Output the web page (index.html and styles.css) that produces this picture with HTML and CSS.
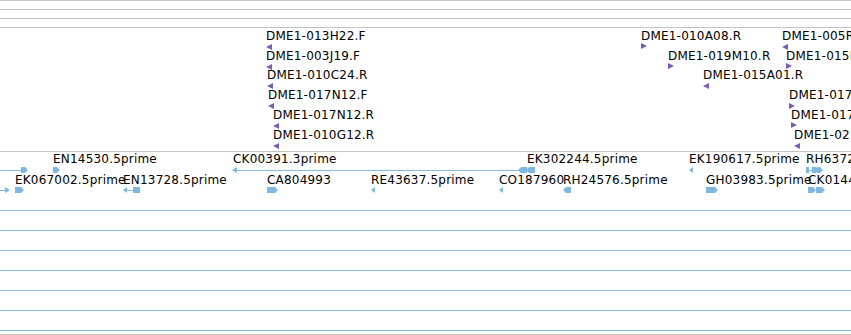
FILE: index.html
```html
<!DOCTYPE html>
<html>
<head>
<meta charset="utf-8">
<link rel="stylesheet" href="styles.css">
</head>
<body>
<div class="view">
  <div class="ruler">
    <div class="rl"></div>
    <div class="rl"></div>
    <div class="rl"></div>
  </div>

  <div class="track clones">
    <span class="lbl" style="left:266px;top:29px">DME1-013H22.F</span>
    <svg class="arr" style="left:266px;top:44px" width="6" height="6"><polygon points="0,3 6,0 6,6"/></svg>
    <span class="lbl" style="left:266px;top:49px">DME1-003J19.F</span>
    <svg class="arr" style="left:266px;top:64px" width="6" height="6"><polygon points="0,3 6,0 6,6"/></svg>
    <span class="lbl" style="left:267px;top:68px">DME1-010C24.R</span>
    <svg class="arr" style="left:267px;top:83px" width="6" height="6"><polygon points="0,3 6,0 6,6"/></svg>
    <span class="lbl" style="left:268px;top:88px">DME1-017N12.F</span>
    <svg class="arr" style="left:268px;top:103px" width="6" height="6"><polygon points="0,3 6,0 6,6"/></svg>
    <span class="lbl" style="left:273px;top:108px">DME1-017N12.R</span>
    <svg class="arr" style="left:273px;top:123px" width="6" height="6"><polygon points="0,3 6,0 6,6"/></svg>
    <span class="lbl" style="left:273px;top:128px">DME1-010G12.R</span>
    <svg class="arr" style="left:273px;top:143px" width="6" height="6"><polygon points="0,3 6,0 6,6"/></svg>

    <span class="lbl" style="left:641px;top:29px">DME1-010A08.R</span>
    <svg class="arr" style="left:641px;top:43px" width="6" height="6"><polygon points="0,0 6,3 0,6"/></svg>
    <span class="lbl" style="left:668px;top:49px">DME1-019M10.R</span>
    <svg class="arr" style="left:668px;top:63px" width="6" height="6"><polygon points="0,0 6,3 0,6"/></svg>
    <span class="lbl" style="left:703px;top:68px">DME1-015A01.R</span>
    <svg class="arr" style="left:703px;top:83px" width="6" height="6"><polygon points="0,3 6,0 6,6"/></svg>

    <span class="lbl" style="left:782px;top:29px">DME1-005R22.F</span>
    <svg class="arr" style="left:782px;top:44px" width="6" height="6"><polygon points="0,3 6,0 6,6"/></svg>
    <span class="lbl" style="left:786px;top:49px">DME1-015B04.R</span>
    <svg class="arr" style="left:786px;top:63px" width="6" height="6"><polygon points="0,0 6,3 0,6"/></svg>
    <span class="lbl" style="left:789px;top:88px">DME1-017A11.R</span>
    <svg class="arr" style="left:789px;top:103px" width="6" height="6"><polygon points="0,0 6,3 0,6"/></svg>
    <span class="lbl" style="left:791px;top:108px">DME1-017B05.R</span>
    <svg class="arr" style="left:791px;top:122px" width="6" height="6"><polygon points="0,0 6,3 0,6"/></svg>
    <span class="lbl" style="left:794px;top:128px">DME1-021C09.F</span>
    <svg class="arr" style="left:794px;top:143px" width="6" height="6"><polygon points="0,3 6,0 6,6"/></svg>
  </div>

  <div class="track ests">
    <!-- row A -->
    <div class="line" style="left:0;top:170px;width:24px"></div>
    <svg class="est" style="left:21px;top:167px" width="8" height="6"><polygon points="0,0 4,0 7,3 4,6 0,6"/></svg>
    <span class="lbl" style="left:53px;top:152px">EN14530.5prime</span>
    <svg class="est" style="left:53px;top:167px" width="8" height="6"><polygon points="0,0 4,0 7,3 4,6 0,6"/></svg>
    <span class="lbl" style="left:233px;top:152px">CK00391.3prime</span>
    <div class="line" style="left:235px;top:170px;width:290px"></div>
    <svg class="est" style="left:232px;top:167px" width="6" height="6"><polygon points="0,3 5,0 5,6"/></svg>
    <span class="lbl" style="left:527px;top:152px">EK302244.5prime</span>
    <svg class="est" style="left:518px;top:167px" width="18" height="6"><polygon points="0,3 3,0 9,0 9,6 3,6"/><polygon points="8,3 11,0 17,0 17,6 11,6"/></svg>
    <span class="lbl" style="left:689px;top:152px">EK190617.5prime</span>
    <svg class="est" style="left:689px;top:167px" width="5" height="6"><polygon points="0,3 4,0 4,6"/></svg>
    <span class="lbl" style="left:806px;top:152px">RH63722.5prime</span>
    <div class="line" style="left:806px;top:170px;width:10px"></div>
    <svg class="est" style="left:806px;top:167px" width="18" height="6"><polygon points="0,0 3,0 3,6 0,6"/><polygon points="6,0 10,0 13,3 10,6 6,6"/><polygon points="11,0 14,0 17,3 14,6 11,6"/></svg>

    <!-- row B -->
    <div class="line" style="left:0;top:190px;width:8px"></div>
    <svg class="est" style="left:5px;top:187px" width="6" height="6"><polygon points="0,0 5,3 0,6"/></svg>
    <span class="lbl" style="left:15px;top:173px">EK067002.5prime</span>
    <svg class="est" style="left:15px;top:187px" width="10" height="6"><polygon points="0,0 6,0 9,3 6,6 0,6"/></svg>
    <span class="lbl" style="left:123px;top:173px">EN13728.5prime</span>
    <div class="line" style="left:125px;top:190px;width:10px"></div>
    <svg class="est" style="left:123px;top:187px" width="18" height="6"><polygon points="0,3 4,0 4,6"/><polygon points="10,0 17,0 17,6 10,6"/></svg>
    <span class="lbl" style="left:267px;top:173px">CA804993</span>
    <svg class="est" style="left:267px;top:187px" width="12" height="6"><polygon points="0,0 8,0 11,3 8,6 0,6"/></svg>
    <span class="lbl" style="left:371px;top:173px">RE43637.5prime</span>
    <svg class="est" style="left:371px;top:187px" width="5" height="6"><polygon points="0,3 4,0 4,6"/></svg>
    <span class="lbl" style="left:499px;top:173px">CO187960</span>
    <svg class="est" style="left:499px;top:187px" width="5" height="6"><polygon points="0,3 4,0 4,6"/></svg>
    <span class="lbl" style="left:563px;top:173px">RH24576.5prime</span>
    <svg class="est" style="left:563px;top:187px" width="9" height="6"><polygon points="0,3 3,0 8,0 8,6 3,6"/></svg>
    <span class="lbl" style="left:706px;top:173px">GH03983.5prime</span>
    <svg class="est" style="left:706px;top:187px" width="13" height="6"><polygon points="0,0 9,0 12,3 9,6 0,6"/></svg>
    <span class="lbl" style="left:808px;top:173px">CK014461.5prime</span>
    <svg class="est" style="left:808px;top:187px" width="18" height="6"><polygon points="0,0 5,0 8,3 5,6 0,6"/><polygon points="8,0 14,0 17,3 14,6 8,6"/></svg>
  </div>

  <div class="lanes">
    <div class="lane"></div>
    <div class="lane"></div>
    <div class="lane"></div>
    <div class="lane"></div>
    <div class="lane"></div>
    <div class="lane"></div>
    <div class="lane last"></div>
  </div>
</div>
</body>
</html>
```

FILE: styles.css
```css
html, body {
  margin: 0;
  padding: 0;
  background: #ffffff;
}
.view {
  width: 851px;
  height: 335px;
  overflow: hidden;
  position: relative;
  font-family: "DejaVu Sans", Verdana, sans-serif;
  font-size: 12px;
  color: #000;
}
.ruler {
  display: flex;
  flex-direction: column;
}
.rl {
  height: 8px;
  border-top: 1px solid #c4c4c4;
}
.track {
  position: relative;
  border-top: 1px solid #c4c4c4;
}
.clones {
  height: 123px;
}
.ests {
  height: 58px;
}
/* features are positioned on the coordinate canvas of their track */
.lbl {
  position: absolute;
  white-space: nowrap;
  line-height: 14px;
  letter-spacing: 0.2px;
}
.clones .lbl { margin-top: -28px; }
.clones .arr { margin-top: -28px; }
.ests .lbl { margin-top: -152px; }
.ests .est, .ests .line { margin-top: -152px; }
.arr {
  position: absolute;
  fill: #7a5cb4;
}
.est {
  position: absolute;
  fill: #7fb7e1;
}
.line {
  position: absolute;
  height: 1px;
  background: #86bde6;
}
.lanes {
  display: flex;
  flex-direction: column;
}
.lane {
  height: 19px;
  border-top: 1px solid #86bde6;
}
.lane.last {
  height: 3px;
  border-bottom: 1px solid #c4c4c4;
}
```
